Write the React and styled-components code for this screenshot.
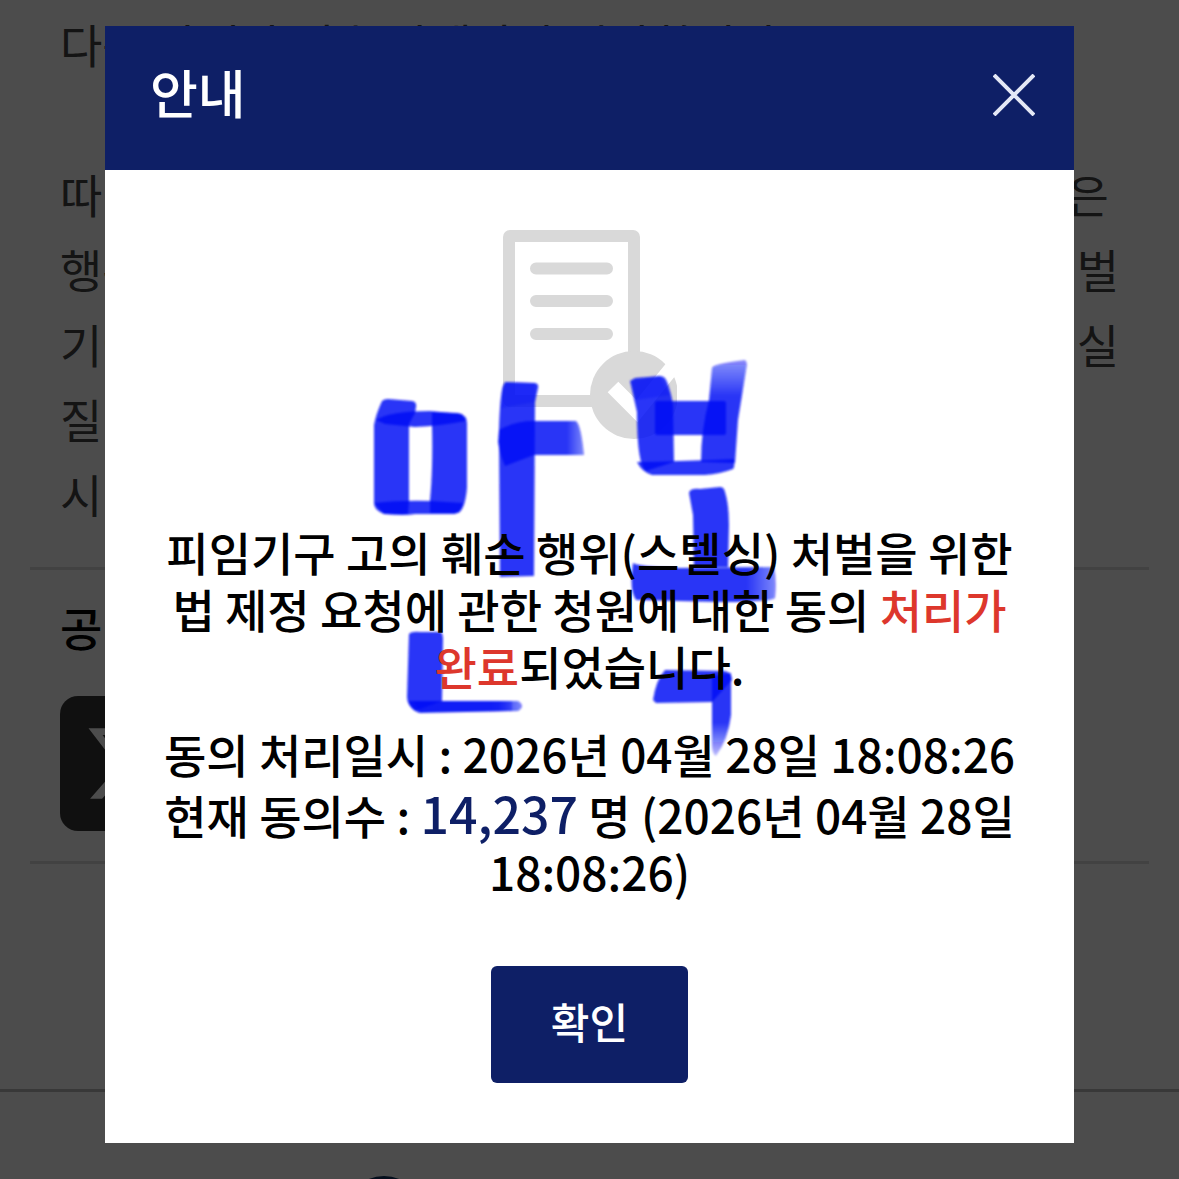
import React from "react";
import styled, { createGlobalStyle } from "styled-components";
import { FaXTwitter } from "react-icons/fa6";

const paragraph = [
  ["따라", "은 "],
  ["행위", "벌"],
  ["기여", "실"],
  ["질", ""],
  ["시", ""],
];

function DocumentIcon() {
  return (
    <svg width="174" height="210" viewBox="503 230 174 210" aria-hidden="true">
      <rect x="509" y="236" width="125" height="165" rx="1" fill="none" stroke="#d9d9d9" strokeWidth="12" />
      <path d="M536 268.500H607M536 301H607M536 334H607" stroke="#d9d9d9" strokeWidth="12" strokeLinecap="round" />
      <circle cx="634" cy="395" r="44" fill="#d9d9d9" />
      <path d="M613 387L637 411L672 368" fill="none" stroke="#fff" strokeWidth="15" />
    </svg>
  );
}

function Scribble() {
  return (
    <Ink viewBox="370 355 410 405" aria-hidden="true">
      <defs>
        <linearGradient id="fadeRight">
          <stop offset="0.8" stopColor="#000df5" />
          <stop offset="1" stopColor="#000df5" stopOpacity="0.6" />
        </linearGradient>
        <linearGradient id="fadeTop" x2="0" y2="1">
          <stop offset="0" stopColor="#000df5" stopOpacity="0.55" />
          <stop offset="0.35" stopColor="#000df5" />
        </linearGradient>
        <linearGradient id="fadeBottom" x2="0" y2="1">
          <stop offset="0.6" stopColor="#000df5" />
          <stop offset="1" stopColor="#000df5" stopOpacity="0.3" />
        </linearGradient>
        <filter id="soft">
          <feGaussianBlur stdDeviation="1" />
        </filter>
      </defs>
      <g filter="url(#soft)" fill="#000df5" fillOpacity="0.84">
        <path d="M382 401Q384 399 388 399L412 401Q417 402 416 407L415 413L409 424V502L408 514H384Q374 510 374 503V425Q376 414 382 401Z" />
        <path d="M432 425V412L458 413Q467 415 467 423V488Q465 510 458 513H430V500Q433 470 432 425Z" />
        <path d="M376 420Q390 411 430 411L462 414L466 421Q440 426 415 427L385 424Z" />
        <path d="M374 503Q400 500 432 501L463 503Q461 512 455 514H415Q405 516 384 514Z" />
        <path d="M505 382L535 383Q539 384 538 388L535 402L534 576L500 577L499 430Q500 395 503 386Z" />
        <path d="M503 386Q505 382 509 382L535 383L535 402L501 408Z" fillOpacity="0.3" />
        <path d="M499 430Q515 421 533 421H576Q581 425 584 455H534L505 466Q500 455 498 442Z" fill="url(#fadeRight)" />
        <path d="M630 381L635 378L660 376Q665 376 667 382Q671 392 673 405L674 462L646 471Q637 465 637 412Z" />
        <path d="M632 381L660 376L670 395L636 400Z" fillOpacity="0.3" />
        <path d="M712 368Q712 364 745 360Q748 362 746 370L738 420L735 463L701 462Q701 430 709 400Z" fill="url(#fadeTop)" />
        <path d="M657 401H724Q726 401 726 403V433Q726 435 724 435H657Q655 435 655 433V403Q655 401 657 401Z" />
        <path d="M637 462Q690 461 734 459Q735 467 733 469Q720 474 705 475H652Q642 472 637 462Z" />
        <path d="M689 493Q690 488 700 489L720 487Q724 487 725 492Q729 505 729 525L728 567H694L693 515Z" />
        <path d="M633 563Q640 567 680 568L774 567Q777 580 775 598Q770 602 720 602L636 600Q629 590 633 563Z" fill="url(#fadeRight)" />
        <path d="M409 634Q412 631 420 632L440 632Q443 632 443 640L442 701L415 711Q407 705 407 697Z" />
        <path d="M408 701H518Q526 706 518 711L420 713Q412 711 408 701Z" fill="url(#fadeRight)" />
        <path d="M413 701H512V711L420 712Z" fill="url(#fadeRight)" fillOpacity="0.6" />
        <path d="M653 700Q656 680 665 670L725 671Q732 673 732 680L712 702L656 703Z" />
        <path d="M712 703V676L731 673V715Q728 740 716 756Q712 754 712 745Z" fill="url(#fadeBottom)" />
      </g>
    </Ink>
  );
}

function PetitionPage() {
  return (
    <Page>
      <Article>
        <Line>다음 사례가 지속 가해자가 시작합니다</Line>
        <Line />
        {paragraph.map(([start, end]) => (
          <Line key={start}>
            <span>{start}</span>
            <span>{end}</span>
          </Line>
        ))}
      </Article>
      <Share>
        <ShareTitle>공</ShareTitle>
        <ShareButton type="button" aria-label="X">
          <FaXTwitter size={87} />
        </ShareButton>
      </Share>
      <PageFooter>
        <Emblem />
      </PageFooter>
    </Page>
  );
}

function App() {
  return (
    <>
      <GlobalStyle />
      <PetitionPage />
      <Overlay>
        <Modal role="dialog" aria-modal="true" aria-labelledby="modal-title">
          <ModalHeader>
            <ModalTitle id="modal-title">안내</ModalTitle>
            <CloseButton type="button" aria-label="닫기">
              <svg width="42" height="42" viewBox="0 0 42 42" aria-hidden="true">
                <path d="M1 1L41 41M41 1L1 41" stroke="#e4e8f6" strokeWidth="4" />
              </svg>
            </CloseButton>
          </ModalHeader>
          <ModalBody>
            <DocumentIcon />
            <Scribble />
            <Message>
              <p>
                피임기구 고의 훼손 행위(스텔싱) 처벌을 위한 법 제정 요청에 관한
                청원에 대한 동의 <Done>처리가 완료</Done>되었습니다.
              </p>
              <Info>
                <p>동의 처리일시 : 2026년 04월 28일 18:08:26</p>
                <p>
                  현재 동의수 : <Count>14,237</Count> 명 (2026년 04월 28일
                  18:08:26)
                </p>
              </Info>
            </Message>
            <ConfirmButton type="button">확인</ConfirmButton>
          </ModalBody>
        </Modal>
      </Overlay>
    </>
  );
}

export default App;

const GlobalStyle = createGlobalStyle`
  * {
    box-sizing: border-box;
  }

  body,
  p,
  h1,
  h2 {
    margin: 0;
  }

  body,
  button {
    font-family: "Noto Sans CJK KR", sans-serif;
  }
`;

const Page = styled.main`
  height: 100vh;
  padding-top: 6px;
  overflow: hidden;
  background: #fff;
`;

const Article = styled.article`
  margin: 0 30px;
  padding: 0 30px 36px;
  border-bottom: 3px solid #ddd;
  color: #444;
  font-size: 46px;
`;

const Line = styled.p`
  display: flex;
  justify-content: space-between;
  height: 75px;
  line-height: 75px;
  white-space: pre;
`;

const Share = styled.section`
  margin: 0 30px;
  padding: 20px 30px 30px;
  border-bottom: 3px solid #ddd;
`;

const ShareTitle = styled.h2`
  margin-bottom: 34px;
  color: #000;
  font-size: 46px;
  font-weight: 500;
  line-height: 72px;
`;

const ShareButton = styled.button`
  display: flex;
  align-items: center;
  justify-content: center;
  width: 135px;
  height: 135px;
  padding: 0;
  border: 0;
  border-radius: 18px;
  background: #383838;
  color: #fff;
`;

const PageFooter = styled.footer`
  margin-top: 225px;
  padding: 84px 344px;
  border-top: 3px solid #bbb;
`;

const Emblem = styled.div`
  width: 80px;
  height: 80px;
  border-radius: 50%;
  background: #0f3060;
`;

const Overlay = styled.div`
  position: fixed;
  inset: 0;
  padding: 26px 105px;
  background: rgba(0, 0, 0, 0.7);
`;

const Modal = styled.section`
  background: #fff;
`;

const ModalHeader = styled.header`
  display: flex;
  align-items: center;
  justify-content: space-between;
  height: 144px;
  padding: 0 39px 6px 45px;
  background: #0e1f66;
`;

const ModalTitle = styled.h1`
  padding-bottom: 6px;
  color: #fff;
  font-size: 52px;
  font-weight: 500;
  line-height: 78px;
`;

const CloseButton = styled.button`
  display: flex;
  padding: 0;
  border: 0;
  background: none;
`;

const ModalBody = styled.div`
  position: relative;
  display: flex;
  flex-direction: column;
  align-items: center;
  padding: 60px 48px;
`;

const Ink = styled.svg`
  position: absolute;
  top: 185px;
  left: 50%;
  width: 410px;
  height: 405px;
  margin-left: -220px;
`;

const Message = styled.div`
  position: relative;
  margin-top: 83px;
  color: #000;
  font-size: 46px;
  font-weight: 500;
  line-height: 57px;
  text-align: center;
  word-break: keep-all;
`;

const Info = styled.div`
  display: grid;
  gap: 2px;
  margin-top: 31px;
`;

const Done = styled.span`
  color: #dd372c;
`;

const Count = styled.strong`
  color: #0e1f66;
  font-size: 50px;
  font-weight: 500;
`;

const ConfirmButton = styled.button`
  width: 197px;
  height: 117px;
  margin-top: 66px;
  padding: 0 0 8px;
  border: 0;
  border-radius: 6px;
  background: #0e1f66;
  color: #fff;
  font-size: 42px;
  font-weight: 500;
`;
